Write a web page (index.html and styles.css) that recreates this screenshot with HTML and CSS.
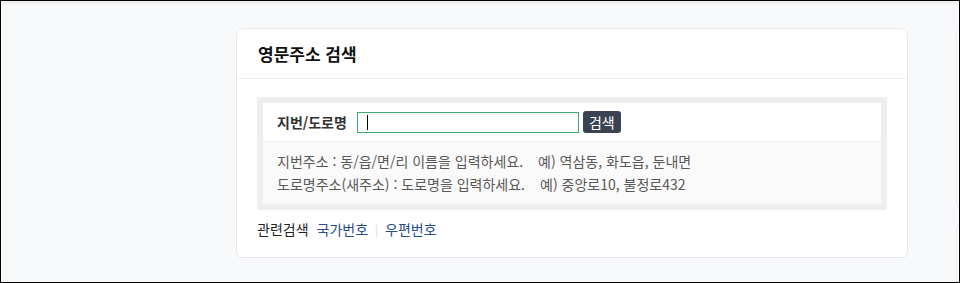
FILE: index.html
```html
<!DOCTYPE html>
<html lang="ko">
<head>
    <meta charset="UTF-8">
    <meta name="viewport" content="width=device-width, initial-scale=1.0">
    <title>영문주소 검색</title>
    <link rel="stylesheet" href="styles.css">
</head>
<body>
    <div class="page">
        <div class="layout">
            <!-- 영문주소 검색 -->
            <section class="card card-main">
                <h2 class="card-title">영문주소 검색</h2>
                <div class="card-body">
                    <div class="search-box">
                        <form class="search-row" onsubmit="return false">
                            <label class="search-label" for="keyword">지번/도로명</label>
                            <span class="input-wrap">
                                <input class="search-input" id="keyword" type="text" autofocus>
                            </span>
                            <button class="search-btn" type="submit">검색</button>
                        </form>
                        <div class="search-help">
                            <p>지번주소 : 동/읍/면/리 이름을 입력하세요.<span class="ex">예) 역삼동, 화도읍, 둔내면</span></p>
                            <p>도로명주소(새주소) : 도로명을 입력하세요.<span class="ex">예) 중앙로10, 불정로432</span></p>
                        </div>
                    </div>
                    <div class="related">
                        <span class="related-title">관련검색</span>
                        <a href="#">국가번호</a>
                        <span class="sep">|</span>
                        <a href="#">우편번호</a>
                    </div>
                </div>
            </section>
            <!-- 오른쪽 -->
            <aside class="side">
                <div class="card side-card"></div>
                <div class="card side-card"></div>
            </aside>
        </div>
    </div>
</body>
</html>
```

FILE: styles.css
```css
* {
    box-sizing: border-box;
}
body {
    margin: 0;
    font-family: "Noto Sans CJK KR", "Noto Sans", sans-serif;
    color: #333;
}
.page {
    height: 283px;
    border: 1px solid #000;
    background: #f8f9fb;
    box-shadow: inset 0 5px 4px -3px rgba(0, 0, 0, .07);
    overflow: hidden;
}
.layout {
    display: flex;
    gap: 48px;
    padding: 27px 0 0 235px;
}
.card {
    background: #fff;
    border: 1px solid #e6e8eb;
    border-radius: 6px;
}
.card-main {
    flex: 0 0 672px;
    height: 230px;
}
.card-title {
    margin: 0;
    height: 50px;
    padding: 0 21px;
    display: flex;
    align-items: center;
    font-size: 17px;
    font-weight: bold;
    color: #111;
    border-bottom: 1px solid #eceef0;
}
.card-body {
    padding: 18px 20px 0;
}
.search-box {
    border: 6px solid #eee;
}
.search-row {
    display: flex;
    align-items: center;
    height: 39px;
    margin: 0;
    padding: 0 14px;
    border-bottom: 1px solid #eee;
}
.search-label {
    font-size: 14px;
    font-weight: bold;
    color: #333;
    margin-right: 10px;
}
.input-wrap {
    position: relative;
    display: flex;
}
/* 입력 커서 */
.input-wrap::after {
    content: '';
    position: absolute;
    left: 10px;
    top: 3px;
    width: 1px;
    height: 15px;
    background: #000;
}
.search-input {
    width: 222px;
    height: 21px;
    border: 1px solid #3aae68;
    padding: 0 8px;
    font-size: 13px;
    outline: none;
    caret-color: transparent;
}
.search-btn {
    margin-left: 4px;
    width: 38px;
    height: 22px;
    padding: 0;
    border: none;
    border-radius: 3px;
    background: #3b4252;
    color: #fff;
    font-family: inherit;
    font-size: 14px;
    cursor: pointer;
}
.search-help {
    background: #fafafa;
    padding: 8px 14px 8px;
}
.search-help p {
    margin: 0;
    font-size: 14px;
    line-height: 23px;
    color: #585858;
}
.search-help .ex {
    margin-left: 15px;
}
.related {
    display: flex;
    align-items: center;
    height: 38px;
    font-size: 14px;
}
.related-title {
    color: #222;
    margin-right: 8px;
}
.related a {
    color: #284d8a;
    text-decoration: none;
}
.related .sep {
    color: #d5d5d5;
    margin: 0 7px;
    font-size: 11px;
}
.side {
    flex: 0 0 300px;
    display: flex;
    flex-direction: column;
    gap: 18px;
    padding-top: 1px;
}
.side-card {
    height: 178px;
}
```
